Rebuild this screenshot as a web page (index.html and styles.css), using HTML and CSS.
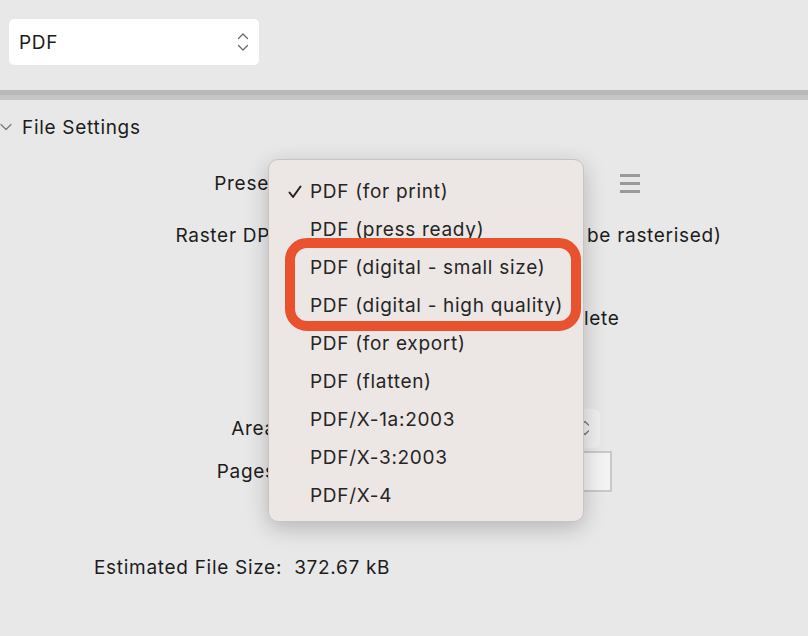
FILE: index.html
```html
<!DOCTYPE html>
<html lang="en">
<head>
  <meta charset="UTF-8" />
  <title>Export PDF</title>
  <link rel="stylesheet" href="styles.css">
</head>
<body>
  <div class="top-bar">
    <div class="format-select">
      <span>PDF</span>
      <svg class="updown" width="12" height="24" viewBox="0 0 12 24" fill="none" stroke="#666" stroke-width="1.2" stroke-linecap="round" stroke-linejoin="round">
        <polyline points="1.5 8.5 6 4 10.5 8.5"></polyline>
        <polyline points="1.5 15.5 6 20 10.5 15.5"></polyline>
      </svg>
    </div>
  </div>
  <div class="divider"></div>

  <div class="section-head">
    <svg width="12" height="8" viewBox="0 0 12 8" fill="none" stroke="#777" stroke-width="1.2" stroke-linecap="round" stroke-linejoin="round">
      <polyline points="1 1.5 6 6.5 11 1.5"></polyline>
    </svg>
    <span>File Settings</span>
  </div>

  <div class="form">
    <div class="row row-preset">
      <label>Preset:</label>
      <div class="value">
        <div class="field preset-field"></div>
        <div class="menu-icon"><i></i><i></i><i></i></div>
      </div>
    </div>
    <div class="row row-dpi">
      <label>Raster DPI:</label>
      <div class="value"><span class="dpi-field"></span><span> be rasterised)</span></div>
    </div>
    <div class="row row-blank"></div>
    <div class="row row-check">
      <label></label>
      <div class="value"><span class="check-text">Allow export to be incomp</span><span>lete</span></div>
    </div>
    <div class="row row-spacer"></div>
    <div class="row row-area">
      <label>Area:</label>
      <div class="value">
        <div class="field area-field">
          <svg width="10" height="18" viewBox="0 0 10 18" fill="none" stroke="#777" stroke-width="1.2" stroke-linecap="round" stroke-linejoin="round">
            <polyline points="1.5 6 5 2.5 8.5 6"></polyline>
            <polyline points="1.5 12 5 15.5 8.5 12"></polyline>
          </svg>
        </div>
      </div>
    </div>
    <div class="row row-pages">
      <label>Pages:</label>
      <div class="value"><div class="pages-input"></div></div>
    </div>
  </div>

  <div class="file-size">Estimated File Size:&nbsp; 372.67 kB</div>

  <div class="preset-menu">
    <div class="menu-item">
      <svg class="tick" width="14" height="14" viewBox="0 0 14 14" fill="none" stroke="#222" stroke-width="2" stroke-linecap="round" stroke-linejoin="round">
        <polyline points="1.5 7.5 5 12 12.5 1.5"></polyline>
      </svg>PDF (for print)
    </div>
    <div class="menu-item">PDF (press ready)</div>
    <div class="menu-item">PDF (digital - small size)</div>
    <div class="menu-item">PDF (digital - high quality)</div>
    <div class="menu-item">PDF (for export)</div>
    <div class="menu-item">PDF (flatten)</div>
    <div class="menu-item">PDF/X-1a:2003</div>
    <div class="menu-item">PDF/X-3:2003</div>
    <div class="menu-item">PDF/X-4</div>
  </div>

  <div class="highlight"></div>
</body>
</html>
```

FILE: styles.css
```css
body {
  margin: 0;
  width: 808px;
  height: 636px;
  overflow: hidden;
  position: relative;
  background: #e8e8e8;
  font-family: Inter, "Noto Sans", sans-serif;
  font-size: 19px;
  letter-spacing: 0.7px;
  color: #1c1c1c;
}
.top-bar {
  height: 90px;
  box-sizing: border-box;
  padding: 19px 0 0 9px;
}
.format-select {
  width: 250px;
  height: 46px;
  box-sizing: border-box;
  background: #fff;
  border-radius: 5px;
  padding: 0 10px;
  display: flex;
  align-items: center;
  justify-content: space-between;
}
.divider {
  height: 5px;
  background: #c5c5c5;
  border-top: 5px solid #b9b9b9;
}
.section-head {
  height: 56px;
  display: flex;
  align-items: center;
  gap: 10px;
  padding-bottom: 2px;
  box-sizing: border-box;
}
.form {
  display: flex;
  flex-direction: column;
}
.row {
  display: grid;
  grid-template-columns: 282px 1fr;
  column-gap: 2px;
  align-items: center;
}
.row label {
  text-align: right;
}
.row-preset { height: 45px; margin-top: 5px; }
.row-dpi { height: 50px; margin-top: 4px; }
.row-blank { height: 38px; }
.row-check { height: 40px; }
.row-spacer { height: 70px; }
.row-area { height: 40px; }
.row-pages { height: 44px; margin-top: 1px; }
.value {
  display: flex;
  align-items: center;
}
.field {
  background: #efefef;
  border-radius: 6px;
}
.preset-field {
  width: 290px;
  height: 38px;
}
.menu-icon {
  margin-left: 46px;
  display: flex;
  flex-direction: column;
  gap: 5px;
}
.menu-icon i {
  display: block;
  width: 20px;
  height: 3px;
  background: #9a9a9a;
}
.dpi-field {
  display: inline-block;
  width: 303px;
}
.check-text {
  display: inline-block;
  width: 300px;
  overflow: hidden;
  white-space: nowrap;
  visibility: hidden;
}
.area-field {
  width: 316px;
  height: 39px;
  display: flex;
  align-items: center;
  justify-content: flex-end;
  padding-right: 10px;
  box-sizing: border-box;
}
.pages-input {
  width: 328px;
  height: 41px;
  box-sizing: border-box;
  background: #f3f3f3;
  border: 2px solid #c9c9c9;
}
.file-size {
  margin: 63px 0 0 94px;
}
.preset-menu {
  position: absolute;
  left: 268px;
  top: 159px;
  width: 316px;
  height: 363px;
  box-sizing: border-box;
  padding-top: 13px;
  background: #ece7e4;
  border: 1px solid #c8c4c1;
  border-radius: 10px;
  box-shadow: 0 6px 22px rgba(0, 0, 0, 0.22);
  color: #252525;
}
.menu-item {
  height: 38px;
  line-height: 38px;
  padding-left: 41px;
  position: relative;
  white-space: nowrap;
}
.tick {
  position: absolute;
  left: 19px;
  top: 12px;
}
.highlight {
  position: absolute;
  left: 285px;
  top: 238px;
  width: 296px;
  height: 93px;
  box-sizing: border-box;
  border: 10px solid #e9522f;
  border-radius: 22px;
}
```
